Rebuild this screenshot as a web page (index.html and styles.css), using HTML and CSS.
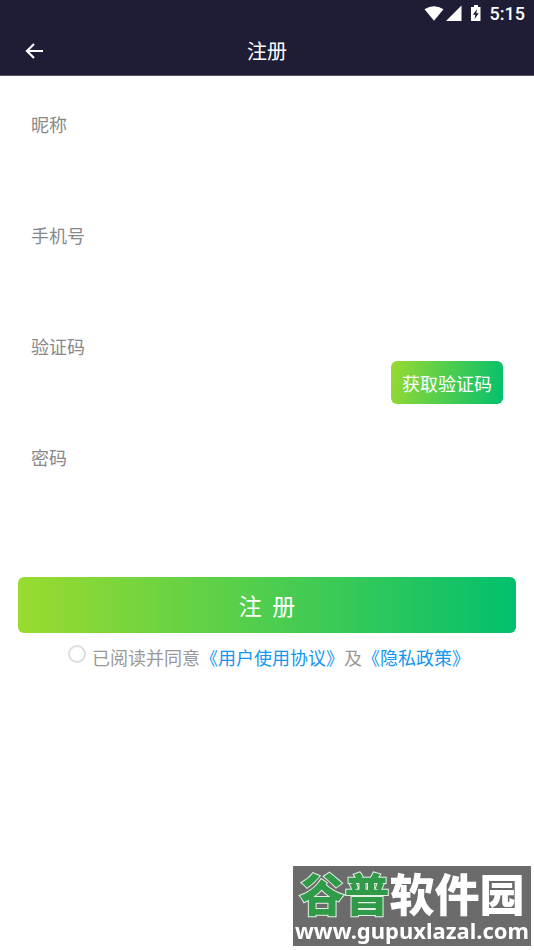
FILE: index.html
```html
<!DOCTYPE html>
<html lang="zh-CN">
<head>
<meta charset="utf-8">
<meta name="viewport" content="width=device-width, initial-scale=1">
<title>注册</title>
<link rel="stylesheet" href="styles.css">
</head>
<body>
<header class="top">
  <div class="status">
    <svg class="status-icons" width="60" height="18" viewBox="0 0 60 18" aria-hidden="true">
      <path fill="#fff" d="M0.500 4.200Q10-1.800 19.500 4.200L10 15.700Z"/>
      <path fill="#fff" d="M37.500 0.500V16H22Z"/>
      <path fill="#fff" fill-rule="evenodd" d="M50 0h4v2h2.500v14h-9.500v-14h3zM53 4L49 9.800h2.300L50.600 14L54.800 8.300h-2.400z"/>
    </svg>
    <span class="clock">5:15</span>
  </div>
  <div class="bar">
    <button class="back" type="button" aria-label="返回">
      <svg width="20" height="18" viewBox="0 0 20 18" fill="none" stroke="#fff" stroke-width="2.200" aria-hidden="true">
        <path d="M10 2L3 9L10 16M3 9H19"/>
      </svg>
    </button>
    <h1 class="title">注册</h1>
  </div>
</header>
<main>
  <form class="form">
    <div class="field">
      <label for="nick">昵称</label>
      <input id="nick" type="text">
    </div>
    <div class="field">
      <label for="phone">手机号</label>
      <input id="phone" type="tel">
    </div>
    <div class="field">
      <label for="code">验证码</label>
      <div class="code-row">
        <input id="code" type="text">
        <button class="send" type="button">获取验证码</button>
      </div>
    </div>
    <div class="field">
      <label for="pass">密码</label>
      <input id="pass" type="password">
    </div>
    <button class="submit" type="submit">注&nbsp;&nbsp;册</button>
    <div class="agree">
      <input id="agree" type="checkbox">
      <label for="agree">已阅读并同意</label>
      <a href="#terms">《用户使用协议》</a>
      <span>及</span>
      <a href="#privacy">《隐私政策》</a>
    </div>
  </form>
</main>
<aside class="mark">
  <div class="mark-name"><span class="mark-green">谷普</span>软件园</div>
  <div class="mark-url">www.gupuxlazal.com</div>
</aside>
</body>
</html>
```
FILE: styles.css
```css
* {
  box-sizing: border-box;
}

body {
  margin: 0;
  min-height: 100vh;
  background: #fff;
  color: #888;
  font-family: "Noto Sans CJK SC", sans-serif;
  font-size: 18px;
  line-height: 24px;
}

button,
input {
  font: inherit;
  border: 0;
  padding: 0;
}

.top {
  background: #1e1d35;
  color: #fff;
}

.status {
  display: flex;
  justify-content: flex-end;
  align-items: center;
  gap: 6px;
  height: 27px;
  padding-right: 9px;
}

.clock {
  font-family: Roboto, sans-serif;
  font-size: 18px;
  font-weight: 500;
}

.bar {
  display: grid;
  grid-template-columns: 44px 1fr 44px;
  align-items: center;
  height: 49px;
  border-bottom: 1px solid #55555f;
}

.back {
  display: flex;
  justify-content: flex-end;
  background: none;
}

.title {
  margin: 0;
  font-size: 20px;
  font-weight: 400;
  text-align: center;
}

.form {
  padding: 36px 18px 0;
}

.field {
  height: 111px;
  padding: 0 13px;
}

.field label {
  display: block;
}

.field input {
  width: 100%;
  height: 44px;
  margin-top: 12px;
  background: none;
  color: #333;
  outline: none;
}

.code-row {
  display: flex;
  gap: 12px;
  padding-top: 3px;
}

.code-row input {
  flex: 1;
  min-width: 0;
  margin-top: 10px;
}

.send {
  height: 43px;
  padding: 0 11px;
  border-radius: 6px;
  background: linear-gradient(100deg, #98da30, #03c06d);
  color: #fff;
}

.submit {
  display: block;
  width: 100%;
  height: 56px;
  margin-top: 21px;
  border-radius: 6px;
  background: linear-gradient(90deg, #9adb2f, #03c06d);
  color: #fff;
  font-size: 23px;
}

.agree {
  display: flex;
  justify-content: center;
  margin-top: 12px;
  padding-left: 4px;
  color: #999;
}

.agree input {
  appearance: none;
  width: 18px;
  height: 18px;
  margin: 0 6px 0 0;
  border: 2px solid #ddd;
  border-radius: 50%;
}

.agree a {
  color: #1296f0;
  text-decoration: none;
}

.mark {
  position: fixed;
  right: 3px;
  bottom: 4px;
  padding: 5px 2px 0;
  background: #6b6b6b;
  color: #fff;
  text-align: center;
  white-space: nowrap;
}

.mark-name {
  font-size: 45px;
  font-weight: 900;
  line-height: 44px;
}

.mark-green {
  color: #2f9a48;
  -webkit-text-stroke: 2px #e4efe5;
  paint-order: stroke fill;
}

.mark-url {
  font-family: "Noto Sans", sans-serif;
  font-size: 22px;
  font-weight: 700;
  line-height: 31px;
}
```
